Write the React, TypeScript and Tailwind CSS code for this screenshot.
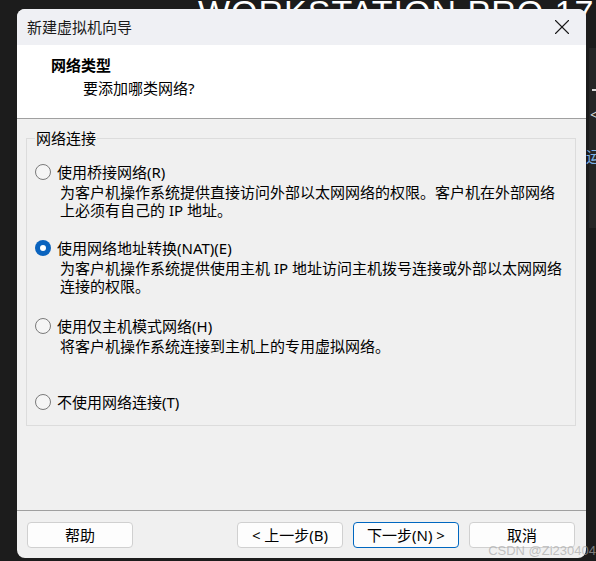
import { X } from 'lucide-react';

type Option = {
  label: string;
  key: string;
  desc: string[];
  checked?: boolean;
  gap: string;
};

const OPTIONS: Option[] = [
  {
    label: '使用桥接网络',
    key: '(R)',
    desc: ['为客户机操作系统提供直接访问外部以太网网络的权限。客户机在外部网络', '上必须有自己的 IP 地址。'],
    gap: 'mt-0',
  },
  {
    label: '使用网络地址转换',
    key: '(NAT)(E)',
    desc: ['为客户机操作系统提供使用主机 IP 地址访问主机拨号连接或外部以太网网络', '连接的权限。'],
    checked: true,
    gap: 'mt-[20px]',
  },
  {
    label: '使用仅主机模式网络',
    key: '(H)',
    desc: ['将客户机操作系统连接到主机上的专用虚拟网络。'],
    gap: 'mt-[22px]',
  },
  {
    label: '不使用网络连接',
    key: '(T)',
    desc: [],
    gap: 'mt-[20px]',
  },
];

function Radio({ checked }: { checked?: boolean }) {
  if (checked) {
    return (
      <span className="w-4 h-4 shrink-0 rounded-full bg-[#0a63be] flex items-center justify-center">
        <span className="w-[6px] h-[6px] rounded-full bg-white" />
      </span>
    );
  }
  return <span className="w-4 h-4 shrink-0 rounded-full border border-[#7a7a7a] bg-[#f5f5f5]" />;
}

function Button({ children, primary }: { children: React.ReactNode; primary?: boolean }) {
  return (
    <button
      className={
        primary
          ? 'w-[106px] h-[26px] rounded-[4px] bg-[#fdfdfd] border border-[#0067c0] text-[15px] leading-[18px] text-black'
          : 'w-[106px] h-[26px] rounded-[4px] bg-[#fdfdfd] border border-[#d0d0d0] text-[15px] leading-[18px] text-black'
      }
    >
      {children}
    </button>
  );
}

export default function App() {
  return (
    <div className="relative w-[596px] h-[561px] overflow-hidden bg-[#1c1c1c] pt-[9px] pl-[17px] font-['Noto_Sans','Noto_Sans_CJK_SC',sans-serif]">
      {/* desktop behind the dialog */}
      <div className="absolute left-[198px] top-[-5px] text-[34px] leading-none tracking-[1px] text-white font-['Liberation_Sans',sans-serif] whitespace-nowrap">
        WORKSTATION PRO 17
      </div>
      <div className="absolute left-[589px] top-[48px] w-[7px] h-[180px] bg-[#262626]" />
      <div className="absolute left-[592px] top-[89px] w-[4px] h-[2px] bg-[#d8d8d8]" />
      <div className="absolute left-[590px] top-[108px] text-[14px] leading-none text-[#d8d8d8]">&lt;</div>
      <div className="absolute left-[586px] top-[149px] text-[15px] leading-none text-[#7fb2e6]">运</div>

      <div className="relative z-10 w-[569px] h-[549px] rounded-[8px] overflow-hidden bg-[#f0f0f0] flex flex-col text-black">
        <div className="h-[36px] shrink-0 bg-[#eff0f4] flex items-center justify-between pl-[10px] pr-[11px]">
          <span className="text-[15px] leading-[18px] text-[#1a1a1a]">新建虚拟机向导</span>
          <X size={26} strokeWidth={1} className="text-[#1a1a1a]" />
        </div>

        <div className="h-[74px] shrink-0 bg-white border-b border-[#a0a0a0] pl-[34px] pt-[11px]">
          <div className="text-[15px] leading-[18px] font-bold">网络类型</div>
          <div className="mt-[5px] pl-[32px] text-[15px] leading-[18px]">要添加哪类网络?</div>
        </div>

        <div className="flex-1 pl-[9px] pr-[10px] pt-[10px]">
          <fieldset className="border border-[#dcdcdc] pl-[8px] pt-[16px] pb-[14px]">
            <legend className="px-[1px] text-[15px] leading-[18px]">网络连接</legend>
            {OPTIONS.map((o) => (
              <div key={o.key} className={o.gap}>
                <div className="h-[18px] flex items-center gap-[6px]">
                  <Radio checked={o.checked} />
                  <span className="text-[15px] leading-[18px] whitespace-nowrap">
                    {o.label}
                    {o.key}
                  </span>
                </div>
                {o.desc.length > 0 && (
                  <div className="mt-[2px] h-[36px] pl-[25px] text-[15px] leading-[18px] whitespace-nowrap">
                    {o.desc.map((line) => (
                      <div key={line}>{line}</div>
                    ))}
                  </div>
                )}
              </div>
            ))}
          </fieldset>
        </div>

        <div className="h-[48px] shrink-0 border-t border-[#a0a0a0] pl-[10px] pr-[11px] pt-[11px] flex justify-between">
          <Button>帮助</Button>
          <div className="flex gap-[10px]">
            <Button>&lt; 上一步(B)</Button>
            <Button primary>下一步(N) &gt;</Button>
            <Button>取消</Button>
          </div>
        </div>
      </div>

      <div className="absolute z-20 right-0 bottom-[4px] text-[13px] leading-none text-[#a9a9a9]/70 font-['Liberation_Sans',sans-serif] whitespace-nowrap">
        CSDN @Zi230404
      </div>
    </div>
  );
}
